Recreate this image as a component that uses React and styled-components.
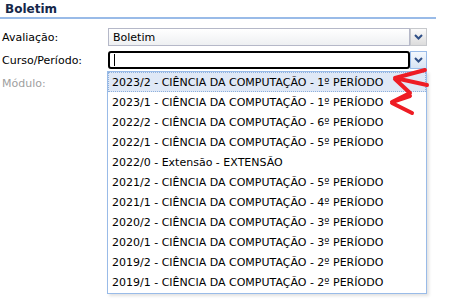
import React from "react";
import styled, { createGlobalStyle } from "styled-components";

const Global = createGlobalStyle`
  html, body { margin: 0; padding: 0; background: #fff; }
  body { font-family: "DejaVu Sans", Verdana, sans-serif; font-size: 11px; color: #000; }
`;

const Page = styled.div`
  position: relative;
  width: 449px;
  height: 307px;
  overflow: hidden;
`;

const Title = styled.div`
  margin: 0 13px 0 0;
  padding: 2px 0 1px 5px;
  font-weight: bold;
  font-size: 12px;
  color: #15284a;
  border-bottom: 2px solid #99bbe8;
`;

const Form = styled.div`
  display: flex;
  flex-direction: column;
  gap: 5px;
  padding: 9px 0 0 2px;
`;

const Row = styled.div`
  position: relative;
  display: flex;
  align-items: center;
  height: 18px;
`;

const Label = styled.label`
  width: 106px;
  flex: none;
  color: ${(p) => (p.$disabled ? "#a0a0a0" : "#000")};
`;

const Combo = styled.div`
  display: flex;
  height: 18px;
`;

const Input = styled.div`
  box-sizing: border-box;
  width: 302px;
  height: 18px;
  padding: 1px 4px;
  line-height: 15px;
  background: ${(p) => (p.$focus ? "#fff" : "linear-gradient(#ffffff, #eef0f2)")};
  border: ${(p) => (p.$focus ? "2px solid #000" : "1px solid #b5b8c8")};
  border-radius: ${(p) => (p.$focus ? "3px" : "0")};
  display: flex;
  align-items: center;
`;

const Caret = styled.span`
  width: 1px;
  height: 12px;
  background: #000;
`;

const Trigger = styled.div`
  box-sizing: border-box;
  width: 17px;
  height: 18px;
  border: 1px solid ${(p) => (p.$hover ? "#99bbe8" : "#c6c8cc")};
  background: ${(p) => (p.$hover ? "linear-gradient(#f4f8fd, #d7e4f4)" : "linear-gradient(#fbfbfb, #dcdcdc)")};
  display: flex;
  align-items: center;
  justify-content: center;
`;

const List = styled.ul`
  position: absolute;
  left: 105px;
  top: 20px;
  z-index: 2;
  box-sizing: border-box;
  width: 320px;
  margin: 0;
  padding: 0 0 1px;
  list-style: none;
  background: #fff;
  border: 1px solid #99bbe8;
  box-shadow: 2px 2px 3px rgba(0, 0, 0, 0.12);
`;

const Item = styled.li`
  box-sizing: border-box;
  height: 20px;
  padding: 1px 3px 0;
  line-height: 17px;
  white-space: nowrap;
  border: 1px ${(p) => (p.$selected ? "dotted #8fb1dd" : "solid transparent")};
  background: ${(p) => (p.$selected ? "#dfe8f6" : "transparent")};
`;

const Scribble = styled.svg`
  position: absolute;
  left: 380px;
  top: 60px;
  z-index: 3;
`;

const Chevron = () => (
  <svg width="9" height="6" viewBox="0 0 9 6">
    <path d="M1 1 L4.5 4.5 L8 1" fill="none" stroke="#2f4f86" strokeWidth="2" />
  </svg>
);

const options = [
  "2023/2 - CIÊNCIA DA COMPUTAÇÃO - 1º PERÍODO",
  "2023/1 - CIÊNCIA DA COMPUTAÇÃO - 1º PERÍODO",
  "2022/2 - CIÊNCIA DA COMPUTAÇÃO - 6º PERÍODO",
  "2022/1 - CIÊNCIA DA COMPUTAÇÃO - 5º PERÍODO",
  "2022/0 - Extensão - EXTENSÃO",
  "2021/2 - CIÊNCIA DA COMPUTAÇÃO - 5º PERÍODO",
  "2021/1 - CIÊNCIA DA COMPUTAÇÃO - 4º PERÍODO",
  "2020/2 - CIÊNCIA DA COMPUTAÇÃO - 3º PERÍODO",
  "2020/1 - CIÊNCIA DA COMPUTAÇÃO - 3º PERÍODO",
  "2019/2 - CIÊNCIA DA COMPUTAÇÃO - 2º PERÍODO",
  "2019/1 - CIÊNCIA DA COMPUTAÇÃO - 2º PERÍODO",
];

export default function App() {
  return (
    <Page>
      <Global />
      <Title>Boletim</Title>
      <Form>
        <Row>
          <Label>Avaliação:</Label>
          <Combo>
            <Input>Boletim</Input>
            <Trigger><Chevron /></Trigger>
          </Combo>
        </Row>
        <Row>
          <Label>Curso/Período:</Label>
          <Combo>
            <Input $focus><Caret /></Input>
            <Trigger $hover><Chevron /></Trigger>
          </Combo>
          <List>
            {options.map((o, i) => (
              <Item key={o} $selected={i === 0}>{o}</Item>
            ))}
          </List>
        </Row>
        <Row>
          <Label $disabled>Módulo:</Label>
        </Row>
      </Form>
      <Scribble width="60" height="60" viewBox="0 0 60 60">
        <path
          d="M47 25 L15 18 L45 10 M15 19 L30 33 L12 42 L30 36 M12 43 L32 53"
          fill="none"
          stroke="#ee1c24"
          strokeWidth="4"
          strokeLinecap="round"
          strokeLinejoin="round"
        />
      </Scribble>
    </Page>
  );
}
